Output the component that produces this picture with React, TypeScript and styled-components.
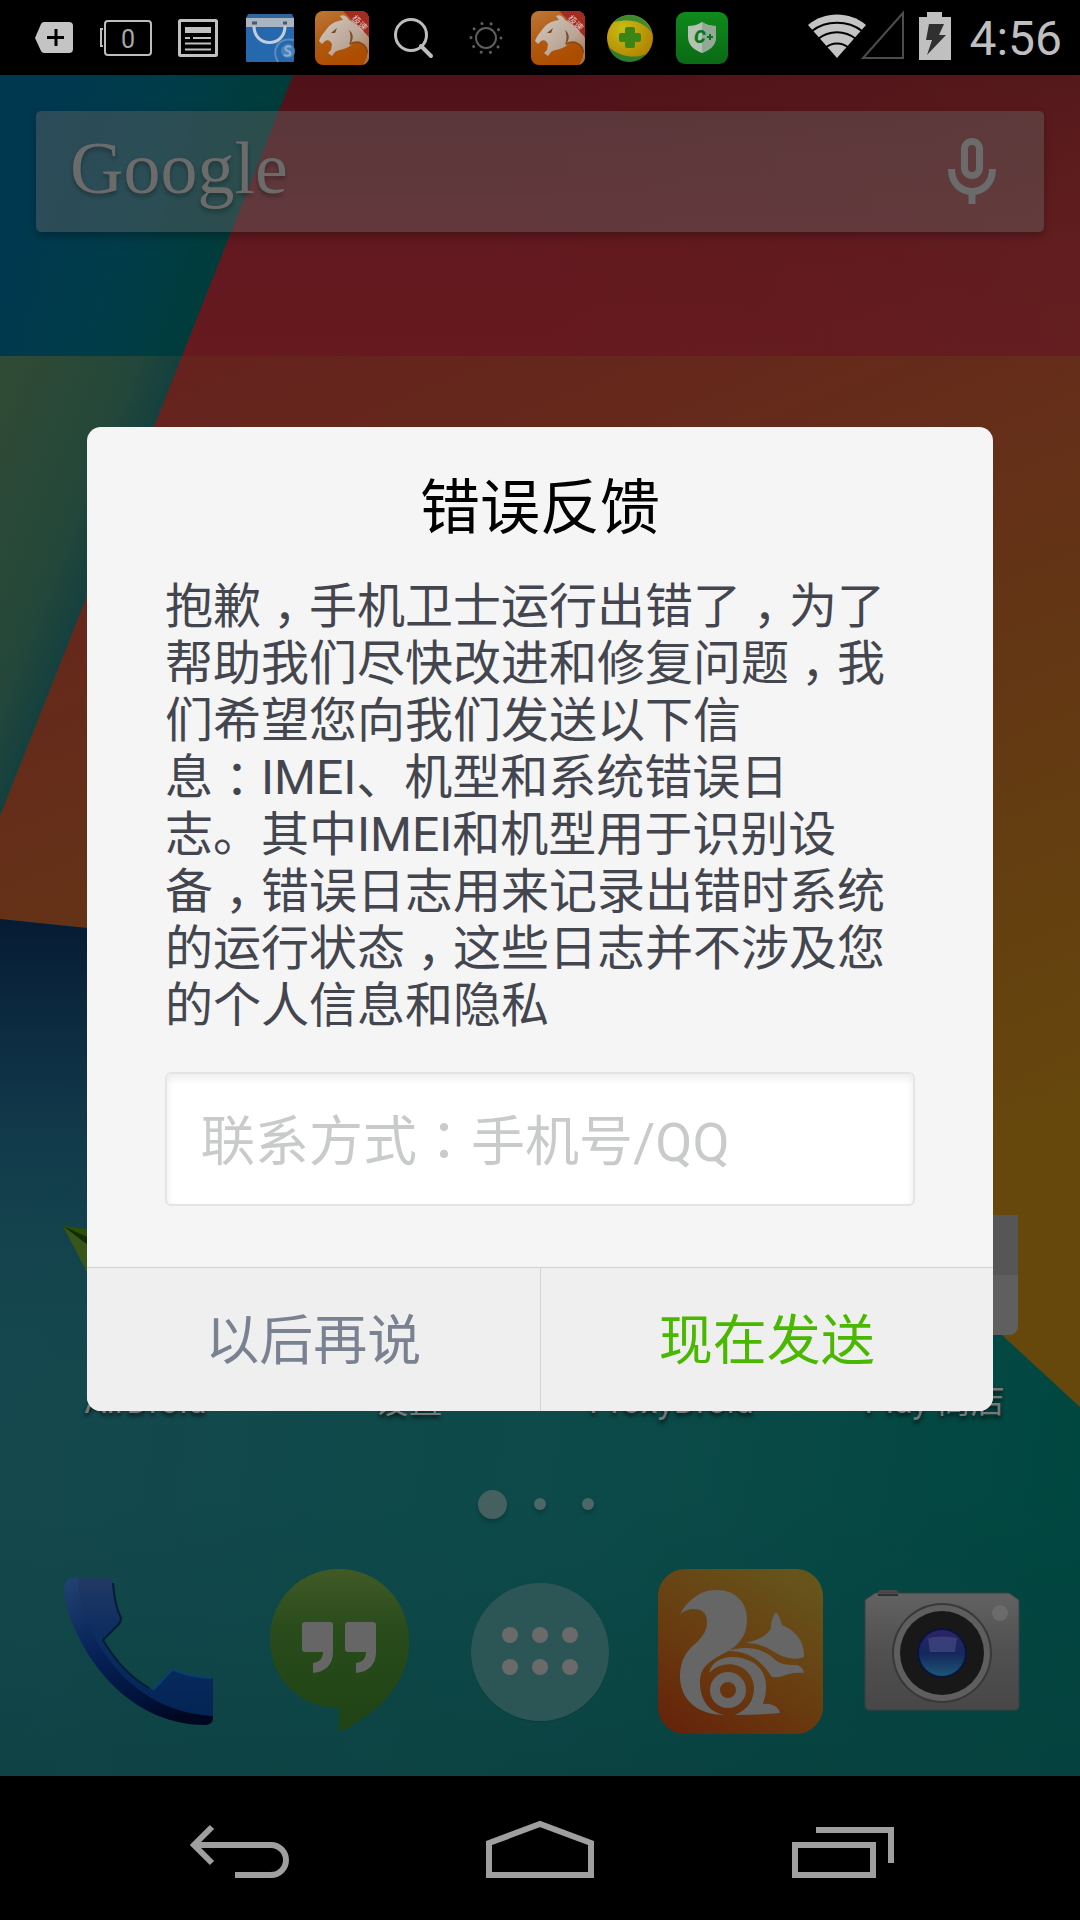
import React from "react";
import styled, { createGlobalStyle } from "styled-components";

const GlobalStyle = createGlobalStyle`
  *, *::before, *::after { box-sizing: border-box; }
  body {
    margin: 0;
    background: #000;
    font-family: Roboto, "Noto Sans CJK SC", sans-serif;
  }
  button { border: 0; padding: 0; background: none; font: inherit; cursor: pointer; }
  svg { display: block; }
`;

const Screen = styled.div`
  display: flex;
  flex-direction: column;
  min-height: 100vh;
`;

/* ---------- status bar ---------- */

const StatusBar = styled.header`
  display: flex;
  align-items: center;
  justify-content: space-between;
  height: 75px;
  padding: 0 18px;
  background: #000;
  color: #bfbfbf;
`;

const StatusGroup = styled.div`
  display: flex;
  align-items: center;
`;

const Clock = styled.time`
  margin-left: 12px;
  padding-top: 3px;
  font-size: 48px;
  line-height: 72px;
`;

const StatusIcon = ({ children, width = 72 }: { children: React.ReactNode; width?: number }) => (
  <svg width={width} height={75} viewBox={`0 0 ${width} 75`} aria-hidden="true">
    {children}
  </svg>
);

const LeopardIcon = ({ id }: { id: string }) => (
  <StatusIcon>
    <defs>
      <linearGradient id={`${id}-bg`} x1="0" y1="0" x2=".5" y2="1">
        <stop offset="0" stopColor="#c0783a" />
        <stop offset=".5" stopColor="#b05a10" />
        <stop offset="1" stopColor="#ad4c00" />
      </linearGradient>
      <linearGradient id={`${id}-fur`} x1="0" y1="0" x2="1" y2="1">
        <stop offset="0" stopColor="#d2cac3" />
        <stop offset=".6" stopColor="#b9a493" />
        <stop offset="1" stopColor="#a9683a" />
      </linearGradient>
      <clipPath id={`${id}-clip`}>
        <rect x="9" y="11" width="54" height="54" rx="8" />
      </clipPath>
    </defs>
    <g clipPath={`url(#${id}-clip)`}>
      <rect x="9" y="11" width="54" height="54" fill={`url(#${id}-bg)`} />
      <path
        d="M34 16 C37 14 41 16 43 20 C51 24 60 31 64 40 V65 H57 C64 55 63 44 53 43 C49 42 47 43 44 46 C38 50 34 49 29 52 L26 56 L22 53 L25 50 L26 44 C24 40 21 39 18 42 L16 44 L13 41 C14 37 17 34 20 30 C24 24 29 21 37 20 Z"
        fill={`url(#${id}-fur)`}
      />
      <path d="M43 30 C48 34 48 40 43 45 C45 39 45 35 43 30Z" fill="#7c4a26" />
      <path d="M44 44 C52 40 61 44 61 53" stroke="#8a4a17" strokeWidth="2" fill="none" />
      <path d="M25 33 L31 28 L29 33Z" fill="#7a4314" />
      <path d="M37 11 H63 V37Z" fill="#a32c22" />
      <text x="45" y="19" fontSize="9" fill="#e0c5c0" transform="rotate(45 45 19)">
        极速
      </text>
    </g>
  </StatusIcon>
);

const NotificationIcons = () => (
  <StatusGroup>
    <StatusIcon>
      <path d="M26 22 H51 Q55 22 55 26 V49 Q55 53 51 53 H26 Q24 53 23 51 L17 38 L23 24 Q24 22 26 22Z" fill="#c4c4c4" />
      <path d="M38 29 V46 M29 37.500 H46" stroke="#000" strokeWidth="3" />
    </StatusIcon>
    <StatusIcon>
      <rect x="15" y="21" width="46" height="34" rx="3" fill="none" stroke="#bdbdbd" strokeWidth="2" />
      <path d="M13 29 H11 V46 H13" fill="none" stroke="#bdbdbd" strokeWidth="2" />
      <text x="38" y="48" fontSize="25" textAnchor="middle" fill="#a8a8a8">
        0
      </text>
    </StatusIcon>
    <StatusIcon>
      <rect x="17.500" y="20.500" width="37" height="35" rx="1" fill="none" stroke="#c0c0c0" strokeWidth="3" />
      <rect x="23" y="27" width="26" height="6" fill="#c0c0c0" />
      <path d="M23 38 H28 M31 38 H49 M23 43.500 H49 M23 49.500 H49" stroke="#c0c0c0" strokeWidth="2" />
    </StatusIcon>
    <StatusIcon>
      <rect x="12" y="26" width="48" height="36" rx="1" fill="#2668ad" />
      <path d="M14 14 H58 L60 18 H12Z" fill="#31659e" />
      <rect x="12" y="18" width="48" height="9" fill="#a9b6c2" />
      <path d="M18 23 h5 M49 23 h4" stroke="#47586d" strokeWidth="3" />
      <path d="M20 26 C20 48 51 48 51 26" fill="none" stroke="#c3ced8" strokeWidth="3" />
      <path d="M60 40 C44 37 37 50 44 62" fill="none" stroke="#5c8cbc" strokeWidth="2" />
      <circle cx="54" cy="51" r="7" fill="#4a82ba" />
      <path d="M57 47 C52 45 49 49 54 51 C59 53 56 57 50 55" fill="none" stroke="#8db0d2" strokeWidth="2" />
    </StatusIcon>
    <LeopardIcon id="leo-a" />
    <StatusIcon>
      <circle cx="33" cy="35" r="15.500" fill="none" stroke="#bdbdbd" strokeWidth="3" />
      <path d="M43 46 L53 56" stroke="#bdbdbd" strokeWidth="4" strokeLinecap="round" />
    </StatusIcon>
    <StatusIcon>
      <circle cx="36" cy="38" r="10" fill="none" stroke="#5e5e5e" strokeWidth="2" />
      <circle cx="36" cy="38" r="15" fill="none" stroke="#5e5e5e" strokeWidth="3" strokeLinecap="round" strokeDasharray="0.1 9.325" />
    </StatusIcon>
    <LeopardIcon id="leo-b" />
    <StatusIcon>
      <defs>
        <radialGradient id="ball" cx=".35" cy=".3" r=".8">
          <stop offset="0" stopColor="#c8bd14" />
          <stop offset="1" stopColor="#b07c00" />
        </radialGradient>
      </defs>
      <circle cx="36" cy="38" r="23" fill="url(#ball)" />
      <path d="M20 22 C32 9 52 14 58 33 C50 22 38 18 20 22Z" fill="#3f8a2c" />
      <path d="M14 46 C24 57 42 59 52 54 C42 67 20 64 14 46Z" fill="#2f7c2a" />
      <path d="M33 27 H39 Q41 27 41 29 V33 H45 Q47 33 47 35 V40 Q47 42 45 42 H41 V46 Q41 48 39 48 H33 Q31 48 31 46 V42 H27 Q25 42 25 40 V35 Q25 33 27 33 H31 V29 Q31 27 33 27Z" fill="#3a8418" />
    </StatusIcon>
    <StatusIcon>
      <defs>
        <linearGradient id="guard" x1="0" y1="0" x2="0" y2="1">
          <stop offset="0" stopColor="#0f8a1c" />
          <stop offset="1" stopColor="#0a6a15" />
        </linearGradient>
      </defs>
      <rect x="10" y="12" width="52" height="52" rx="9" fill="url(#guard)" />
      <path d="M36 22 C41 25 45 26 50 26 V37 C50 45 44 50 36 53 C28 50 22 45 22 37 V26 C27 26 31 25 36 22Z" fill="#b4c2b4" />
      <path d="M36 22 C41 25 45 26 50 26 V37 C50 45 44 50 36 53Z" fill="#93a895" />
      <text x="28" y="43" fontSize="18" fontWeight="900" fontStyle="italic" fill="#08761a">
        C
      </text>
      <path d="M44 34 V40 M41 37 H47" stroke="#08761a" strokeWidth="2" />
    </StatusIcon>
  </StatusGroup>
);

const SystemIcons = () => (
  <StatusGroup>
    <svg width="150" height="75" viewBox="807 0 150 75" aria-hidden="true">
      <path d="M837 58 L808 25 C824 11 850 11 866 25Z" fill="#c4c4c4" />
      <path d="M812 31 C826 20 848 20 862 31 M818 39 C829 30 845 30 856 39 M825 48 C832 42 842 42 849 48" fill="none" stroke="#000" strokeWidth="2" />
      <path d="M903 13 V58 H863Z" fill="none" stroke="#4d4d4d" strokeWidth="2" />
      <path d="M927 12 H942 V17 H951 V60 H919 V17 H927Z" fill="#c0c0c0" />
      <path d="M929 24 H944 L939 35 H946 L927 55 L932 40 H926Z" fill="#303030" />
    </svg>
    <Clock>4:56</Clock>
  </StatusGroup>
);

/* ---------- home screen ---------- */

const Home = styled.main`
  position: relative;
  isolation: isolate;
  display: flex;
  flex: 1;
  flex-direction: column;
  padding-bottom: 41px;
`;

const WallpaperLayer = styled.svg`
  position: absolute;
  inset: 0;
  z-index: -1;
  width: 100%;
  height: 100%;
`;

const Wallpaper = () => (
  <WallpaperLayer viewBox="0 75 1080 1701" preserveAspectRatio="none" aria-hidden="true">
    <defs>
      <linearGradient id="blue" gradientUnits="userSpaceOnUse" x1="0" y1="250" x2="235" y2="320">
        <stop offset="0" stopColor="#003850" />
        <stop offset=".5" stopColor="#003c48" />
        <stop offset="1" stopColor="#003c36" />
      </linearGradient>
      <linearGradient id="red" gradientUnits="userSpaceOnUse" x1="0" y1="75" x2="0" y2="356">
        <stop offset="0" stopColor="#4e1218" />
        <stop offset=".6" stopColor="#62191f" />
        <stop offset="1" stopColor="#661a20" />
      </linearGradient>
      <linearGradient id="redEdge" x1="0" y1="0" x2="1" y2="0">
        <stop offset=".5" stopColor="#602020" stopOpacity="0" />
        <stop offset="1" stopColor="#602420" stopOpacity=".4" />
      </linearGradient>
      <linearGradient id="olive" gradientUnits="userSpaceOnUse" x1="0" y1="430" x2="144" y2="487">
        <stop offset="0" stopColor="#2f4a35" />
        <stop offset=".65" stopColor="#23473a" />
        <stop offset="1" stopColor="#103e40" />
      </linearGradient>
      <linearGradient id="rust" gradientUnits="userSpaceOnUse" x1="250" y1="330" x2="650" y2="1300">
        <stop offset="0" stopColor="#66221e" />
        <stop offset=".3" stopColor="#652c1a" />
        <stop offset=".65" stopColor="#633a12" />
        <stop offset="1" stopColor="#66480c" />
      </linearGradient>
      <linearGradient id="teal" gradientUnits="userSpaceOnUse" x1="0" y1="1400" x2="1080" y2="1600">
        <stop offset="0" stopColor="#15484e" />
        <stop offset=".5" stopColor="#0d4a49" />
        <stop offset="1" stopColor="#004740" />
      </linearGradient>
      <linearGradient id="deep" gradientUnits="userSpaceOnUse" x1="0" y1="919" x2="0" y2="1400">
        <stop offset="0" stopColor="#061b34" />
        <stop offset=".45" stopColor="#11374a" stopOpacity=".85" />
        <stop offset="1" stopColor="#15464f" stopOpacity="0" />
      </linearGradient>
      <linearGradient id="floor" gradientUnits="userSpaceOnUse" x1="0" y1="1500" x2="0" y2="1776">
        <stop offset="0" stopColor="#0a3c3c" stopOpacity="0" />
        <stop offset="1" stopColor="#0a3c3c" stopOpacity=".5" />
      </linearGradient>
    </defs>
    <rect x="0" y="75" width="1080" height="281" fill="url(#red)" />
    <rect x="0" y="75" width="1080" height="281" fill="url(#redEdge)" />
    <rect x="0" y="356" width="1080" height="1420" fill="url(#rust)" />
    <path d="M0 75 H293 L182 356 H0Z" fill="url(#blue)" />
    <path d="M0 356 H182 L0 816Z" fill="url(#olive)" />
    <path d="M0 919 L87 928 C420 965 720 1080 1003 1336 L1080 1407 V1776 H0Z" fill="url(#teal)" />
    <path d="M0 919 L87 928 C300 950 430 990 560 1040 V1400 H0Z" fill="url(#deep)" />
    <rect x="0" y="1500" width="1080" height="276" fill="url(#floor)" />
  </WallpaperLayer>
);

const SearchBar = styled.div`
  display: flex;
  align-items: center;
  justify-content: space-between;
  height: 121px;
  margin: 36px 36px 0;
  padding: 0 42px 0 34px;
  border-radius: 5px;
  background: rgba(102, 102, 102, 0.42);
  box-shadow: 0 4px 8px rgba(0, 0, 0, 0.25);
`;

const GoogleButton = styled.button`
  padding-bottom: 7px;
  color: #6b6b6b;
  font-family: "Liberation Serif", serif;
  font-size: 74px;
  line-height: 114px;
  text-shadow: 0 3px 4px rgba(0, 0, 0, 0.3);
`;

const Shortcuts = styled.div`
  display: flex;
  margin-top: auto;
  padding: 0 14px;
`;

const Shortcut = styled.button`
  display: flex;
  flex: 1;
  flex-direction: column;
  align-items: center;
  gap: 1px;
  color: #777;
  font-size: 34px;
  line-height: 48px;
  text-shadow: 0 3px 4px rgba(0, 0, 0, 0.7);
`;

const Pages = styled.div`
  display: flex;
  align-items: center;
  justify-content: center;
  height: 30px;
  margin: 64px 0 50px;
`;

const PageDot = styled.span<{ $active?: boolean }>`
  display: flex;
  justify-content: center;
  width: 48px;

  &::before {
    content: "";
    width: ${(p) => (p.$active ? 29 : 12)}px;
    height: ${(p) => (p.$active ? 29 : 12)}px;
    border-radius: 50%;
    background: ${(p) => (p.$active ? "#456060" : "#4b6867")};
    box-shadow: 0 3px 4px rgba(0, 0, 0, 0.2);
  }
`;

const Dock = styled.nav`
  display: flex;
  padding: 0 38px;
`;

const DockButton = styled.button`
  display: flex;
  flex: 1;
  justify-content: center;
`;

const AppSvg = ({ children }: { children?: React.ReactNode }) => (
  <svg width="166" height="166" viewBox="0 0 166 166" aria-hidden="true">
    {children}
  </svg>
);

const AirDroidIcon = () => (
  <AppSvg>
    <path d="M0 16 L150 36 L70 150Z" fill="#39561a" />
    <path d="M0 16 L150 36 L60 58Z" fill="#2c5006" />
    <path d="M0 16 L80 52 L60 62Z" fill="#142e02" />
  </AppSvg>
);

const SettingsIcon = () => (
  <AppSvg>
    <circle cx="83" cy="83" r="60" fill="#3a4a50" />
    <circle cx="83" cy="83" r="24" fill="#15464f" />
  </AppSvg>
);

const ProxyIcon = () => (
  <AppSvg>
    <rect x="20" y="20" width="126" height="126" rx="16" fill="#3c5a2a" />
  </AppSvg>
);

const PlayIcon = () => (
  <AppSvg>
    <path d="M0 5 H166 V115 Q166 125 156 125 H10 Q0 125 0 115Z" fill="#5f5f5f" />
    <path d="M0 5 H166 V65 H0Z" fill="#565656" />
  </AppSvg>
);

const PhoneIcon = () => (
  <AppSvg>
    <defs>
      <linearGradient id="phoneSide" x1=".1" y1="0" x2=".7" y2="1">
        <stop offset="0" stopColor="#20406e" />
        <stop offset=".4" stopColor="#07235a" />
        <stop offset=".8" stopColor="#001238" />
        <stop offset="1" stopColor="#000720" />
      </linearGradient>
      <linearGradient id="phoneFace" x1="0" y1="0" x2="0" y2="1">
        <stop offset="0" stopColor="#213a62" />
        <stop offset=".35" stopColor="#0e2e60" />
        <stop offset="1" stopColor="#022556" />
      </linearGradient>
    </defs>
    <path
      d="M18 9 H54 Q58 9 58 14 C59 28 61 39 66 49 Q66 53 63 56 L48 71 C61 93 78 110 98 121 L116 102 Q118 100 121 102 C132 106 143 108 154 108 Q158 108 158 113 V149 Q158 156 150 156 C110 156 76 137 51 109 C26 80 11 46 9 20 Q9 9 18 9Z"
      fill="url(#phoneSide)"
    />
    <path
      d="M23 9 H54 Q58 9 58 14 C59 28 61 39 66 49 Q66 53 63 56 L48 71 C61 93 78 110 98 121 L116 102 Q118 100 121 102 C132 106 143 108 154 108 Q158 108 158 113 V147 C122 145 92 131 67 106 C42 80 24 46 23 9Z"
      fill="url(#phoneFace)"
    />
    <path d="M98 121 L116 102 Q118 100 121 102 C132 106 143 108 156 109" fill="none" stroke="#0a4070" strokeWidth="2" />
    <path d="M58 14 C59 28 61 39 66 49 Q66 53 63 56 L48 71 C61 93 78 110 94 119" fill="none" stroke="#051c38" strokeWidth="2" />
  </AppSvg>
);

const HangoutsIcon = () => (
  <AppSvg>
    <defs>
      <linearGradient id="hang" x1="0" y1="0" x2="0" y2="1">
        <stop offset="0" stopColor="#405a26" />
        <stop offset=".35" stopColor="#2a4c1c" />
        <stop offset="1" stopColor="#1f4314" />
      </linearGradient>
    </defs>
    <path d="M83 0 C122 0 153 31 153 73 C153 114 122 145 83 163 V139 C44 139 14 110 14 70 C14 31 44 0 83 0Z" fill="url(#hang)" />
    <path
      d="M49 53 H74 Q77 53 77 56 V83 C77 96 69 103 57 104 V94 C64 93 67 89 67 83 H49 Q46 83 46 80 V56 Q46 53 49 53Z M92 53 H117 Q120 53 120 56 V83 C120 96 112 103 100 104 V94 C107 93 110 89 110 83 H92 Q89 83 89 80 V56 Q89 53 92 53Z"
      fill="#666"
    />
  </AppSvg>
);

const AppsIcon = () => (
  <AppSvg>
    <circle cx="83" cy="84" r="69" fill="#0a3d3d" />
    <circle cx="83" cy="83" r="69" fill="#2b5655" />
    {[53, 83, 113].map((x) =>
      [66, 98].map((y) => <circle key={`${x}-${y}`} cx={x} cy={y} r="8" fill="#6a6a6a" />)
    )}
  </AppSvg>
);

const SquirrelIcon = () => (
  <AppSvg>
    <defs>
      <linearGradient id="uc" x1=".15" y1="1" x2=".75" y2="0">
        <stop offset="0" stopColor="#66240a" />
        <stop offset=".45" stopColor="#693c10" />
        <stop offset="1" stopColor="#66541b" />
      </linearGradient>
    </defs>
    <rect x="0" y="0" width="165" height="165" rx="27" fill="url(#uc)" />
    <g fill="#666">
      <path d="M22 45 C32 28 44 21 59 21 C77 21 89 33 89 50 C89 64 84 73 72 81 C54 91 42 96 42 113 C42 130 50 143 67 146 C40 146 22 131 22 107 C22 92 28 82 38 74 C46 66 49 61 49 53 C49 43 43 40 36 40 C30 40 26 42 22 45Z" />
      <path d="M88 74 C100 71 110 66 113 59 C113 52 115 47 118 43 C121 47 123 51 124 56 C138 62 147 73 146 88 C138 91 128 90 118 84 C107 77 99 74 88 74Z" />
      <path d="M70 82 C88 76 104 80 114 88 C122 96 129 96 139 96 Q145 98 146 104 C137 103 130 105 125 107 Q118 109 114 108 C106 97 96 82 70 82Z" />
      <path d="M51 104 C54 92 64 88 75 88 C98 89 109 103 108 119 C108 126 106 131 105 135 C114 134 121 138 122 144 Q100 146 77 146 C91 140 96 130 96 119 C96 98 69 86 51 104Z" />
    </g>
    <circle cx="70" cy="121" r="13" fill="none" stroke="#666" strokeWidth="10" />
  </AppSvg>
);

const CameraIcon = () => (
  <AppSvg>
    <defs>
      <linearGradient id="camBody" x1="0" y1="0" x2="0" y2="1">
        <stop offset="0" stopColor="#626262" />
        <stop offset=".5" stopColor="#505050" />
        <stop offset="1" stopColor="#474747" />
      </linearGradient>
      <linearGradient id="camGlass" x1="0" y1="0" x2="0" y2="1">
        <stop offset="0" stopColor="#2c2468" />
        <stop offset=".5" stopColor="#15275c" />
        <stop offset="1" stopColor="#1c5676" />
      </linearGradient>
    </defs>
    <path d="M19 27 V24 Q19 21 23 21 H35 Q39 21 39 24 V27Z" fill="#4a4a4a" />
    <path d="M16 24 H150 L160 31 V136 Q160 141 156 141 H11 Q6 141 6 136 V31Z" fill="url(#camBody)" stroke="#3c4040" />
    <path d="M19 26 H39" stroke="#2f2f2f" strokeWidth="2" />
    <circle cx="83" cy="84" r="50" fill="#383838" />
    <circle cx="83" cy="84" r="48" fill="#5e5e5e" />
    <circle cx="83" cy="84" r="42" fill="#181818" />
    <circle cx="83" cy="84" r="25" fill="#08143c" />
    <circle cx="83" cy="84" r="23" fill="url(#camGlass)" />
    <path d="M69 69 Q83 66 98 69 L96 83 H71Z" fill="#4a4f88" opacity=".6" />
    <circle cx="141" cy="44" r="8" fill="#6b6b6b" />
  </AppSvg>
);

/* ---------- dialog ---------- */

const Overlay = styled.div`
  position: absolute;
  inset: 0;
  display: flex;
  align-items: center;
  padding: 0 87px 13px;
`;

const Dialog = styled.section`
  width: 100%;
  overflow: hidden;
  border-radius: 14px;
  background: #f5f5f5;
`;

const DialogBody = styled.div`
  padding: 46px 78px 61px;
`;

const Title = styled.h1`
  margin: 0 0 33px;
  color: #000;
  font-size: 60px;
  font-weight: 400;
  line-height: 72px;
  text-align: center;
`;

const Message = styled.p`
  margin: 0 0 38px;
  color: #43464f;
  font-size: 48px;
  line-height: 57px;
  white-space: nowrap;
`;

/* Comma and colon: half-width glyph centred in a full-width cell. */
const Mark = styled.span`
  display: inline-block;
  width: 48px;
  font-feature-settings: "halt";
  text-align: center;
`;

const ContactInput = styled.input`
  display: block;
  width: 100%;
  height: 134px;
  padding: 6px 34px 0;
  border: 2px solid #e4e4e4;
  border-radius: 6px;
  background: #fff;
  box-shadow: inset 0 4px 8px rgba(0, 0, 0, 0.08);
  color: #43464f;
  font-family: Roboto, "Noto Sans CJK TC", sans-serif;
  font-size: 54px;

  &::placeholder {
    color: #c9cbcb;
    opacity: 1;
  }
`;

const Actions = styled.div`
  display: flex;
  border-top: 1px solid #d0d2d4;
`;

const Action = styled.button<{ $primary?: boolean }>`
  flex: 1;
  height: 143px;
  padding-bottom: 6px;
  background: #efefef;
  color: ${(p) => (p.$primary ? "#4bb800" : "#7a8292")};
  font-size: 54px;

  &:first-child {
    border-right: 1px solid #d2d3d9;
  }
`;

/* ---------- navigation bar ---------- */

const NavBar = styled.nav`
  display: flex;
  height: 144px;
  padding: 0 89px;
  background: #000;
`;

const NavButton = styled.button`
  display: flex;
  flex: 1;
  justify-content: center;
`;

const NavSvg = ({ d }: { d: string }) => (
  <svg width="120" height="144" viewBox="0 0 120 144" fill="none" stroke="#9f9f9f" strokeWidth="6" aria-hidden="true">
    <path d={d} />
  </svg>
);

const shortcuts = [
  { name: "AirDroid", Icon: AirDroidIcon },
  { name: "设置", Icon: SettingsIcon },
  { name: "ProxyDroid", Icon: ProxyIcon },
  { name: "Play 商店", Icon: PlayIcon },
];

const dockApps = [
  { name: "电话", Icon: PhoneIcon },
  { name: "Hangouts", Icon: HangoutsIcon },
  { name: "应用", Icon: AppsIcon },
  { name: "UC", Icon: SquirrelIcon },
  { name: "相机", Icon: CameraIcon },
];

const navItems = [
  { name: "返回", d: "M33 51 L15 69 L33 87 M15 69 H92 A15 15 0 0 1 92 99 H56" },
  { name: "主屏幕", d: "M9 99 V67 L60 48 L111 67 V99Z" },
  { name: "最近任务", d: "M14 69 H92 V99 H14Z M35 54 H110 V87" },
];

export default function App() {
  return (
    <Screen lang="zh-CN">
      <GlobalStyle />
      <StatusBar>
        <NotificationIcons />
        <SystemIcons />
      </StatusBar>
      <Home>
        <Wallpaper />
        <SearchBar>
          <GoogleButton type="button">Google</GoogleButton>
          <button type="button" aria-label="语音搜索">
            <svg width="60" height="72" viewBox="942 136 60 72" fill="none" stroke="#6b6b6b" aria-hidden="true">
              <rect x="964.500" y="141.500" width="15" height="34" rx="7.500" strokeWidth="7" />
              <path d="M951.500 169 C951.500 199 992.500 199 992.500 169" strokeWidth="7" />
              <path d="M972 190 V204" strokeWidth="7" />
            </svg>
          </button>
        </SearchBar>
        <Shortcuts>
          {shortcuts.map(({ name, Icon }) => (
            <Shortcut key={name} type="button">
              <Icon />
              {name}
            </Shortcut>
          ))}
        </Shortcuts>
        <Pages>
          <PageDot $active />
          <PageDot />
          <PageDot />
        </Pages>
        <Dock>
          {dockApps.map(({ name, Icon }) => (
            <DockButton key={name} type="button" aria-label={name}>
              <Icon />
            </DockButton>
          ))}
        </Dock>
        <Overlay>
          <Dialog role="dialog" aria-labelledby="dialog-title">
            <DialogBody>
              <Title id="dialog-title">错误反馈</Title>
              <Message>
                抱歉<Mark>，</Mark>手机卫士运行出错了<Mark>，</Mark>为了
                <br />
                帮助我们尽快改进和修复问题<Mark>，</Mark>我
                <br />
                们希望您向我们发送以下信
                <br />
                息<Mark>：</Mark>IMEI、机型和系统错误日
                <br />
                志。其中IMEI和机型用于识别设
                <br />
                备<Mark>，</Mark>错误日志用来记录出错时系统
                <br />
                的运行状态<Mark>，</Mark>这些日志并不涉及您
                <br />
                的个人信息和隐私
              </Message>
              <ContactInput type="text" lang="zh-TW" aria-label="联系方式" placeholder="联系方式：手机号/QQ" />
            </DialogBody>
            <Actions>
              <Action type="button">以后再说</Action>
              <Action type="button" $primary>
                现在发送
              </Action>
            </Actions>
          </Dialog>
        </Overlay>
      </Home>
      <NavBar>
        {navItems.map(({ name, d }) => (
          <NavButton key={name} type="button" aria-label={name}>
            <NavSvg d={d} />
          </NavButton>
        ))}
      </NavBar>
    </Screen>
  );
}
